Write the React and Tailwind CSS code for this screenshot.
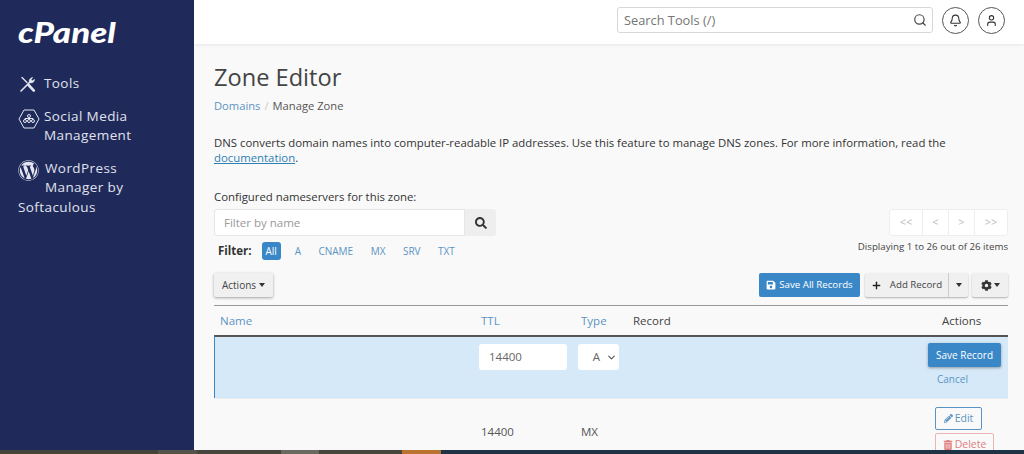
import React from 'react';
import { Bell, ChevronDown, Plus, Search, User } from 'lucide-react';
import { FaCog, FaPencilAlt, FaSave, FaSearch, FaTrashAlt, FaWordpress } from 'react-icons/fa';

const font = { fontFamily: '"Open Sans", sans-serif' };

const filters = ['A', 'CNAME', 'MX', 'SRV', 'TXT'];
const pages = ['<<', '<', '>', '>>'];

const strip = [
  ['w-[158px]', 'bg-[#45443a]'],
  ['w-[39px]', 'bg-[#55544a]'],
  ['w-[84px]', 'bg-[#47463c]'],
  ['w-[38px]', 'bg-[#6b6a60]'],
  ['w-[83px]', 'bg-[#47463c]'],
  ['w-[39px]', 'bg-[#b9722f]'],
  ['flex-1', 'bg-[#1f3347]'],
];

const Caret = () => (
  <span className="inline-block w-0 h-0 border-x-[3.5px] border-x-transparent border-t-[4px] border-t-[#333]" />
);

const ToolsIcon = () => (
  <svg width="16" height="16" viewBox="0 0 16 16" fill="none" stroke="#e4e6f0" strokeLinecap="round">
    <path d="M1 15l9-9" strokeWidth="1.6" />
    <path d="M9.4 6.6C8.6 4.6 9.6 2 12.6 1.4l-1.4 2.2 1.2 1.2 2.2-1.4c-.4 3-3 4.2-5 3.2z" fill="#e4e6f0" strokeWidth="0.6" />
    <path d="M2 1.6l5 5" strokeWidth="1.4" />
    <path d="M8.6 9l5.2 5.6" strokeWidth="2.6" />
  </svg>
);

const SocialIcon = () => (
  <svg width="22" height="20" viewBox="0 0 22 20" fill="none" stroke="#e4e6f0" strokeWidth="1">
    <path d="M6 1h10l5 9-5 9H6l-5-9z" />
    <circle cx="11" cy="7" r="1.5" />
    <circle cx="7" cy="12" r="1.5" />
    <circle cx="11" cy="12" r="1.5" />
    <circle cx="15" cy="12" r="1.5" />
    <path d="M11 8.5v2M7 10.5V9.5h8v1" />
  </svg>
);

const Sidebar = () => (
  <aside className="w-[194px] shrink-0 bg-[#1f2a5a] text-[#e0e2ee] text-[13.5px] leading-[19.5px] tracking-[0.4px]">
    <div className="pl-[15px] pt-[15px] h-[49px] text-white text-[29px] leading-[34px] font-black italic tracking-normal origin-left scale-x-[1.2]" style={{ fontFamily: 'Lato, sans-serif' }}>
      cPanel
    </div>
    <div className="flex items-center gap-[8px] pl-[20px] mt-[25px]">
      <ToolsIcon />
      <span>Tools</span>
    </div>
    <div className="flex gap-[4px] pl-[18px] mt-[13px]">
      <span className="pt-[2px]"><SocialIcon /></span>
      <span>Social Media<br />Management</span>
    </div>
    <div className="pl-[18px] mt-[13px]">
      <div className="flex gap-[6px]">
        <span className="pt-[1px]"><FaWordpress size={21} color="#e4e6f0" /></span>
        <span>WordPress<br />Manager by</span>
      </div>
      <div>Softaculous</div>
    </div>
  </aside>
);

const Header = () => (
  <header className="h-[44px] shrink-0 bg-white shadow-[0_1px_3px_rgba(0,0,0,0.08)] flex items-center justify-end gap-[9px] pr-[19px] pb-[4px] z-10">
    <div className="w-[316px] h-[26px] border border-[#d8d8d8] rounded-[3px] flex items-center justify-between pl-[6px] pr-[5px] text-[12.8px] text-[#757575]">
      <span className="pt-[1px]">Search Tools (/)</span>
      <Search size={14} color="#444" />
    </div>
    <div className="w-[27px] h-[27px] rounded-full border border-[#555] flex items-center justify-center">
      <Bell size={13} color="#333" />
    </div>
    <div className="w-[27px] h-[27px] rounded-full border border-[#555] flex items-center justify-center">
      <User size={13} color="#333" />
    </div>
  </header>
);

const Toolbar = () => (
  <div className="flex items-start justify-between">
    <div>
      <div className="flex w-[282px] h-[27px]">
        <div className="flex-1 bg-white border border-[#e6e6e6] rounded-l-[3px] pl-[9px] text-[11.5px] leading-[25px] text-[#999]">Filter by name</div>
        <div className="w-[31px] bg-[#eee] rounded-r-[3px] flex items-center justify-center">
          <FaSearch size={12} color="#333" />
        </div>
      </div>
      <div className="flex items-center h-[18px] mt-[6px] text-[10px]">
        <span className="ml-[4px] mr-[10px] text-[11.5px] font-bold text-[#333]">Filter:</span>
        <span className="w-[19px] h-[18px] rounded-[3px] bg-[#3a87c8] text-white text-center leading-[18px]">All</span>
        <div className="flex gap-[17.5px] ml-[14px] text-[#5b94c4]">
          {filters.map((f) => <span key={f}>{f}</span>)}
        </div>
      </div>
    </div>
    <div className="flex flex-col items-end">
      <div className="flex h-[27px] bg-white border border-[#eee] rounded-[3px] text-[11px] text-[#bbb]">
        {pages.map((p, i) => (
          <span key={p} className={`flex items-center justify-center ${i === 0 ? 'w-[33px]' : i === 3 ? 'w-[32px]' : 'w-[26px]'} ${i < 3 ? 'border-r border-[#eee]' : ''}`}>{p}</span>
        ))}
      </div>
      <div className="mt-[3px] text-[9.7px] leading-[16px] text-[#444]">Displaying 1 to 26 out of 26 items</div>
    </div>
  </div>
);

const ActionBar = () => (
  <div className="flex items-center justify-between mt-[13px] h-[24px]">
    <button className="w-[59px] h-[24px] bg-[#f0f0f0] rounded-[2px] shadow-[0_1px_3px_rgba(0,0,0,0.35)] text-[10px] text-[#444] flex items-center justify-center gap-[3px]">
      Actions <Caret />
    </button>
    <div className="flex items-center">
      <button className="w-[101px] h-[24px] bg-[#3a87c8] rounded-[2px] text-white text-[9.7px] flex items-center justify-center gap-[3px]">
        <FaSave size={10} />Save All Records
      </button>
      <button className="flex h-[24px] ml-[5px] bg-[#f0f0f0] rounded-[2px] shadow-[0_1px_2px_rgba(0,0,0,0.3)] text-[9.7px] text-[#444]">
        <span className="w-[84px] flex items-center justify-center gap-[8px] border-r border-[#ccc]">
          <Plus size={11} strokeWidth={3} color="#222" />Add Record
        </span>
        <span className="w-[19px] h-full flex items-center justify-center"><Caret /></span>
      </button>
      <button className="w-[36px] h-[24px] ml-[4px] bg-[#f0f0f0] rounded-[2px] shadow-[0_1px_2px_rgba(0,0,0,0.3)] flex items-center justify-center gap-[2px]">
        <FaCog size={11} color="#333" /><Caret />
      </button>
    </div>
  </div>
);

const RecordsTable = () => (
  <div className="mt-[8px] border-t border-[#999] text-[11.5px]">
    <div className="flex h-[29px] items-center text-[#5b94c4]">
      <span className="w-[267px] pl-[6px]">Name</span>
      <span className="w-[100px]">TTL</span>
      <span className="w-[52px]">Type</span>
      <span className="flex-1 text-[#444]">Record</span>
      <span className="w-[66px] text-[#444]">Actions</span>
    </div>
    <div className="h-[63px] flex bg-[#d6e9f8] border-t-2 border-[#555] border-l border-l-[#3a87c8]">
      <div className="w-[264px]" />
      <div className="w-[88px] h-[26px] mt-[7px] bg-white rounded-[3px] pl-[10px] leading-[26px] text-[#666]">14400</div>
      <div className="w-[41px] h-[26px] mt-[7px] ml-[11px] bg-white rounded-[3px] flex items-center justify-end gap-[6px] pr-[2px] text-[#666]">
        A <ChevronDown size={11} color="#555" strokeWidth={2.5} />
      </div>
      <div className="flex-1" />
      <div className="w-[80px] pt-[6px] text-[10px]">
        <button className="w-[73px] h-[24px] bg-[#3a87c8] rounded-[2px] shadow-[0_1px_3px_rgba(0,0,0,0.35)] text-white">Save Record</button>
        <div className="mt-[5px] ml-[9px] text-[#5b94c4]">Cancel</div>
      </div>
    </div>
    <div className="flex border-t border-[#e8eef3]">
      <div className="w-[267px]" />
      <div className="w-[100px] pt-[24px] text-[#555]">14400</div>
      <div className="w-[53px] pt-[24px] text-[#555]">MX</div>
      <div className="flex-1" />
      <div className="w-[73px] pt-[8px] text-[10.5px]">
        <div className="w-[47px] h-[23px] rounded-[2px] border border-[#5b94c4] text-[#5b94c4] flex items-center justify-center gap-[2px]">
          <FaPencilAlt size={9} />Edit
        </div>
        <div className="w-[59px] h-[24px] mt-[3px] rounded-[2px] border border-[#eeb4b4] text-[#e08080] flex items-center justify-center gap-[2px]">
          <FaTrashAlt size={10} />Delete
        </div>
      </div>
    </div>
  </div>
);

const App = () => {
  return (
    <div className="w-[1024px] h-[454px] overflow-hidden flex flex-col bg-white" style={font}>
      <div className="h-[450px] flex overflow-hidden">
        <Sidebar />
        <div className="flex-1 flex flex-col min-w-0">
          <Header />
          <main className="flex-1 bg-[#f9f9f9] pl-[20px] pr-[16px] overflow-hidden">
            <h1 className="mt-[15px] text-[23.6px] leading-[36px] text-[#444]">Zone Editor</h1>
            <div className="mt-[2px] text-[11.2px] leading-[18px]">
              <span className="text-[#5b94c4]">Domains</span>
              <span className="text-[#ccc] mx-[4px]">/</span>
              <span className="text-[#555]">Manage Zone</span>
            </div>
            <p className="mt-[20px] text-[11.36px] leading-[15px] text-[#333]">
              DNS converts domain names into computer-readable IP addresses. Use this feature to manage DNS zones. For more information, read the{' '}
              <span className="text-[#2f7fb5] underline">documentation</span>.
            </p>
            <p className="mt-[23px] mb-[3px] text-[11.36px] leading-[18px] text-[#333]">Configured nameservers for this zone:</p>
            <Toolbar />
            <ActionBar />
            <RecordsTable />
          </main>
        </div>
      </div>
      <div className="h-[4px] shrink-0 flex">
        {strip.map(([w, bg], i) => <div key={i} className={`${w} ${bg}`} />)}
      </div>
    </div>
  );
};

export default App;
